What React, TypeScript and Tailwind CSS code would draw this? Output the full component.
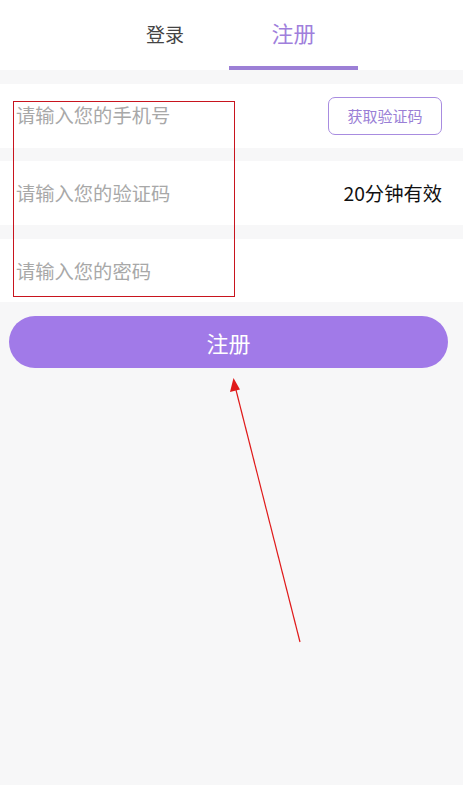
import { useState } from 'react';

const font = { fontFamily: '"Noto Sans CJK SC", "Noto Sans", sans-serif' };

export default function App() {
  const [tab, setTab] = useState<'login' | 'register'>('register');

  return (
    <div className="relative min-h-[785px] w-full bg-[#f7f7f8]" style={font}>
      {/* 顶部切换 */}
      <div className="flex h-[70px] bg-white">
        <div className="flex w-[229px] justify-end pr-[45px]">
          <button
            onClick={() => setTab('login')}
            className="flex h-full items-center pb-[2px] text-[19px] text-[#444]"
          >
            登录
          </button>
        </div>
        <div className="flex w-[129px] flex-col items-center">
          <button
            onClick={() => setTab('register')}
            className="flex flex-1 items-center pb-[1px] text-[22px] text-[#a07fdc]"
          >
            注册
          </button>
          {tab === 'register' && <div className="h-[4px] w-full bg-[#9c7fd6]" />}
        </div>
      </div>

      {/* 表单 */}
      <div className="mt-[14px] flex h-[64px] items-center justify-between bg-white pl-[16px] pr-[21px]">
        <span className="pb-[2px] text-[19.3px] text-[#a8a8a8]">请输入您的手机号</span>
        <button className="h-[38px] w-[114px] rounded-[7px] border border-[#a88ce0] text-[15px] text-[#9a7fd6]">
          获取验证码
        </button>
      </div>
      <div className="mt-[13px] flex h-[64px] items-center justify-between bg-white pl-[16px] pr-[21px]">
        <span className="pt-[1px] text-[19.3px] text-[#a8a8a8]">请输入您的验证码</span>
        <span className="text-[19.3px] text-[#111]">20分钟有效</span>
      </div>
      <div className="mt-[14px] flex h-[63px] items-center bg-white pl-[16px]">
        <span className="pt-[2px] text-[19.3px] text-[#a8a8a8]">请输入您的密码</span>
      </div>

      <div className="px-[9px] pt-[14px] pr-[15px]">
        <button className="h-[52px] w-full rounded-full bg-[#a17ae8] text-[22px] text-white">注册</button>
      </div>

      {/* 标注 */}
      <div className="absolute left-[13px] top-[101px] h-[196px] w-[222px] border border-[#c8141e]" />
      <svg className="absolute left-0 top-0" width="463" height="785" viewBox="0 0 463 785">
        <line x1="300" y1="642" x2="236" y2="390" stroke="#e01a1a" strokeWidth="1.2" />
        <polygon points="233.5,378 230,392 240,389.5" fill="#e01a1a" />
      </svg>
    </div>
  );
}
